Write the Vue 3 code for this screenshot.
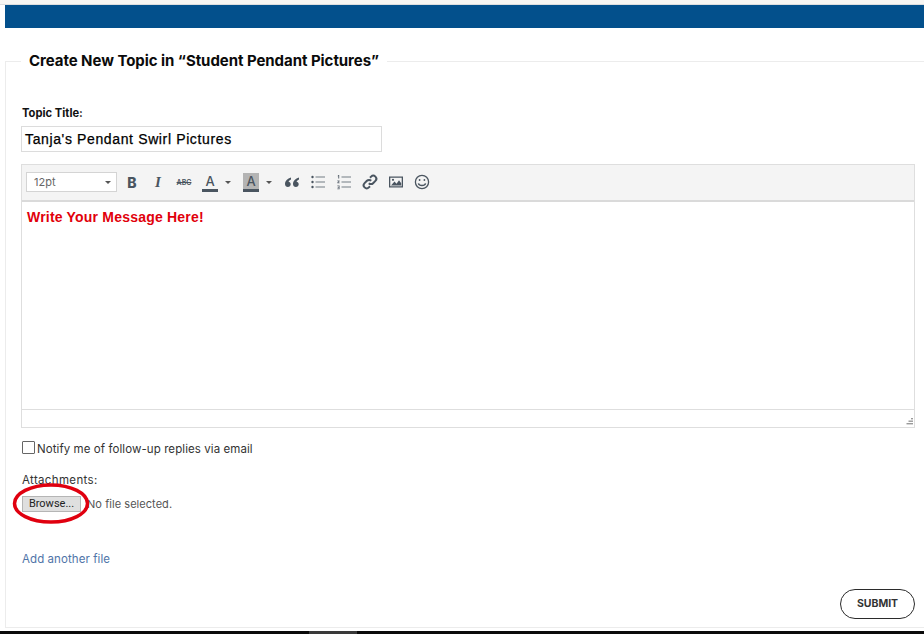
<script setup>
const textColor = '#4a5560'
</script>

<template>
  <div class="page">
    <div class="topstrip"></div>
    <div class="banner"></div>
    <fieldset class="panel">
      <legend class="legend">Create New Topic in “Student Pendant Pictures”</legend>
      <div class="field-label">Topic Title:</div>
      <div class="title-input">Tanja's Pendant Swirl Pictures</div>

      <div class="editor">
        <div class="toolbar">
          <div class="select"><span>12pt</span><i class="caret"></i></div>
          <div class="tools">
            <span class="tool b">B</span>
            <span class="tool it">I</span>
            <span class="tool abc">ABC</span>
            <span class="tool color"><span class="a">A</span><i class="caret"></i></span>
            <span class="tool color bg"><span class="a">A</span><i class="caret"></i></span>
            <svg class="ic quote" viewBox="0 0 16 16" :fill="textColor"><path d="M7 3.500C3.500 4.500 1 7 1 10c0 2 1.300 3 2.900 3S6.700 11.900 6.700 10.300C6.700 8.800 5.700 7.900 4.500 7.800 4.800 6.900 5.800 6 7 5.500zM15 3.500C11.500 4.500 9 7 9 10c0 2 1.300 3 2.900 3s2.800-1.100 2.800-2.700c0-1.500-1-2.400-2.200-2.500.3-.9 1.300-1.800 2.500-2.300z"/></svg>
            <svg class="ic" viewBox="0 0 16 16" :fill="textColor"><circle cx="2.500" cy="3" r="1.200"/><circle cx="2.500" cy="8" r="1.200"/><circle cx="2.500" cy="13" r="1.200"/><rect x="5.500" y="2.500" width="9.500" height="1" opacity=".75"/><rect x="5.500" y="7.500" width="9.500" height="1" opacity=".75"/><rect x="5.500" y="12.500" width="9.500" height="1" opacity=".75"/></svg>
            <svg class="ic" viewBox="0 0 16 16" :fill="textColor"><rect x="5.500" y="2.500" width="9.500" height="1" opacity=".75"/><rect x="5.500" y="7.500" width="9.500" height="1" opacity=".75"/><rect x="5.500" y="12.500" width="9.500" height="1" opacity=".75"/><path d="M2.200 1h1v3.600h-1V2.200H1.500zM1.300 6.500h2.300v.8L2.500 8.600h1.100v.7H1.300v-.7l1.300-1.400H1.300zM1.300 11.500h2.300v3.800H1.300v-.7h1.400v-.9H1.700v-.6h1v-.9H1.300z" opacity=".85"/></svg>
            <svg class="ic" viewBox="0 0 16 16" fill="none" :stroke="textColor" stroke-width="2"><path d="M6.800 9.200a3 3 0 0 0 4.300 0l2.300-2.300a3 3 0 0 0-4.300-4.300L8 3.700"/><path d="M9.200 6.800a3 3 0 0 0-4.300 0L2.600 9.100a3 3 0 0 0 4.300 4.300L8 12.300"/></svg>
            <svg class="ic" viewBox="0 0 16 16" :fill="textColor"><path fill-rule="evenodd" d="M1 2.500h14v11H1zM2.300 3.800v8.400h11.400V3.800z"/><path d="M3 11.500 6.500 7.500l2 2.200 2.500-3.400 2.200 3V11.500z"/><circle cx="5" cy="5.800" r="1.100"/></svg>
            <svg class="ic" viewBox="0 0 16 16" fill="none" :stroke="textColor" stroke-width="1.300"><circle cx="8" cy="8" r="6.600"/><path d="M4.400 9.400c.8 2.800 6.400 2.800 7.200 0" stroke-width="1.500"/><circle cx="5.600" cy="6" r=".9" :fill="textColor" stroke="none"/><circle cx="10.400" cy="6" r=".9" :fill="textColor" stroke="none"/></svg>
          </div>
        </div>
        <div class="body-area">Write Your Message Here!</div>
        <div class="statusbar">
          <svg class="grip" viewBox="0 0 9 9" fill="#9a9a9a"><rect x="7" y="1" width="2" height="1.400"/><rect x="4.500" y="3.500" width="4.500" height="1.400"/><rect x="2.500" y="6" width="6.500" height="1.400"/></svg>
        </div>
      </div>

      <label class="notify"><span class="checkbox"></span>Notify me of follow-up replies via email</label>

      <div class="attach-label">Attachments:</div>
      <div class="file-row">
        <span class="browse">Browse...</span>
        <span class="nofile">No file selected.</span>
        <svg class="ring" viewBox="0 0 78 42" fill="none"><ellipse cx="39" cy="20.500" rx="36.500" ry="18.500" stroke="#e0000f" stroke-width="3.500"/></svg>
      </div>
      <a class="add">Add another file</a>
      <div class="actions"><span class="submit">SUBMIT</span></div>
    </fieldset>
    <div class="bottombar"><span class="thumb"></span></div>
  </div>
</template>

<style scoped>
.page {
  width: 924px;
  height: 634px;
  overflow: hidden;
  display: flex;
  flex-direction: column;
  background: #fff;
  font-family: "Inter", "Liberation Sans", sans-serif;
  color: #333;
}
.topstrip {
  height: 5px;
  flex: none;
  background: #f7f6f3;
  border-bottom: 1px solid #dedede;
  box-sizing: border-box;
}
.banner {
  height: 23px;
  flex: none;
  margin-left: 5px;
  background: #03508c;
}
.panel {
  flex: 1;
  min-height: 0;
  margin: 23px 0 3px 5px;
  padding: 0 9px 0 15px;
  border: 1px solid #ececec;
  border-right: 0;
  min-width: 0;
  box-sizing: border-box;
}
.legend {
  margin-left: 0;
  padding: 0 8px;
  font-size: 15px;
  line-height: 20px;
  font-weight: 700;
  color: #0b0b0b;
  letter-spacing: -0.05px;
  white-space: nowrap;
}
.field-label {
  margin: 34px 0 0 1px;
  font-size: 11.200px;
  line-height: 16px;
  font-weight: 700;
  color: #111;
}
.title-input {
  margin-top: 5px;
  width: 361px;
  height: 26px;
  box-sizing: border-box;
  padding-left: 3px;
  border: 1px solid #dcdcdc;
  font-family: "Liberation Sans", sans-serif;
  font-size: 14px;
  line-height: 25px;
  letter-spacing: 0.63px;
  color: #000;
  -webkit-text-stroke: 0.25px #000;
  white-space: nowrap;
}
.editor {
  margin-top: 12px;
  width: 894px;
  height: 264px;
  box-sizing: border-box;
  border: 1px solid #dedede;
  display: flex;
  flex-direction: column;
}
.toolbar {
  height: 37px;
  flex: none;
  box-sizing: border-box;
  display: flex;
  align-items: center;
  padding: 0 0 1px 4px;
  background: #f4f4f4;
  border-bottom: 2px solid #dadada;
}
.select {
  width: 91px;
  height: 20px;
  box-sizing: border-box;
  border: 1px solid #d4d4d4;
  background: #fff;
  display: flex;
  align-items: center;
  justify-content: space-between;
  padding: 0 5px 0 7px;
  font-size: 11px;
  color: #666;
}
.caret {
  width: 0;
  height: 0;
  border-left: 3px solid transparent;
  border-right: 3px solid transparent;
  border-top: 3.500px solid #555;
}
.tools {
  display: flex;
  align-items: center;
  margin-left: 2px;
  color: #4a5560;
}
.tool {
  display: flex;
  align-items: center;
  justify-content: center;
  width: 26px;
  height: 24px;
}
.b {
  font-size: 14px;
  font-weight: 800;
}
.it {
  font-family: "Liberation Serif", serif;
  font-size: 15px;
  font-weight: 700;
  font-style: italic;
}
.abc {
  font-size: 7px;
  font-weight: 600;
  text-decoration: line-through;
}
.color {
  width: 38px;
  margin-left: 1px;
  justify-content: flex-start;
  gap: 7px;
  padding-left: 4px;
  box-sizing: border-box;
}
.color .a {
  width: 16px;
  height: 19px;
  box-sizing: border-box;
  border-bottom: 3px solid #4a5560;
  text-align: center;
  font-size: 13px;
  line-height: 16px;
  font-weight: 500;
}
.bg {
  margin-left: 3px;
  width: 37px;
}
.bg .a {
  background: #b4b4b4;
}
.ic {
  width: 16px;
  height: 16px;
  margin-right: 10px;
  flex: none;
}
.quote {
  margin-left: 8px;
}
.body-area {
  height: 208px;
  flex: none;
  box-sizing: border-box;
  padding: 7px 5px;
  background: #fff;
  border-bottom: 1px solid #dedede;
  font-family: "Liberation Sans", sans-serif;
  font-size: 14px;
  line-height: 16px;
  font-weight: 700;
  letter-spacing: 0.2px;
  color: #e1000b;
}
.statusbar {
  flex: 1;
  display: flex;
  justify-content: flex-end;
  align-items: flex-end;
  padding: 0 1px 1px 0;
}
.grip {
  width: 9px;
  height: 9px;
}
.notify {
  display: flex;
  align-items: center;
  margin-top: 12px;
  margin-left: 1px;
  height: 17px;
  font-size: 11.500px;
  letter-spacing: 0.08px;
  color: #333;
}
.checkbox {
  width: 13px;
  height: 13px;
  box-sizing: border-box;
  margin: -3px 2px 0 0;
  border: 1px solid #666;
  border-radius: 1px;
  background: #fff;
}
.attach-label {
  margin: 15px 0 0 1px;
  font-size: 11.500px;
  line-height: 16px;
  letter-spacing: 0.35px;
  color: #333;
}
.file-row {
  position: relative;
  display: flex;
  align-items: center;
  margin: 8px 0 0 1px;
  height: 16px;
  font-size: 11px;
}
.browse {
  width: 59px;
  height: 16px;
  box-sizing: border-box;
  border: 1px solid #b5b5b5;
  background: #dfdfdf;
  text-align: center;
  line-height: 14px;
  font-family: "Roboto", sans-serif;
  color: #222;
}
.nofile {
  margin-left: 6px;
  color: #555;
  letter-spacing: 0.05px;
}
.ring {
  position: absolute;
  left: -10px;
  top: -13px;
  width: 78px;
  height: 42px;
}
.add {
  display: block;
  margin: 39px 0 0 1px;
  font-size: 11.500px;
  line-height: 16px;
  letter-spacing: 0.08px;
  color: #4f74a8;
}
.actions {
  display: flex;
  justify-content: flex-end;
  margin-top: 22px;
  width: 894px;
}
.submit {
  width: 75px;
  height: 30px;
  box-sizing: border-box;
  border: 1px solid #2b2b2b;
  border-radius: 15px;
  text-align: center;
  font-size: 10.500px;
  line-height: 28px;
  font-weight: 700;
  color: #333;
}
.bottombar {
  height: 3px;
  flex: none;
  background: #0a0a0a;
  padding-left: 309px;
}
.thumb {
  display: block;
  width: 48px;
  height: 3px;
  background: #3a3a3a;
}
</style>
